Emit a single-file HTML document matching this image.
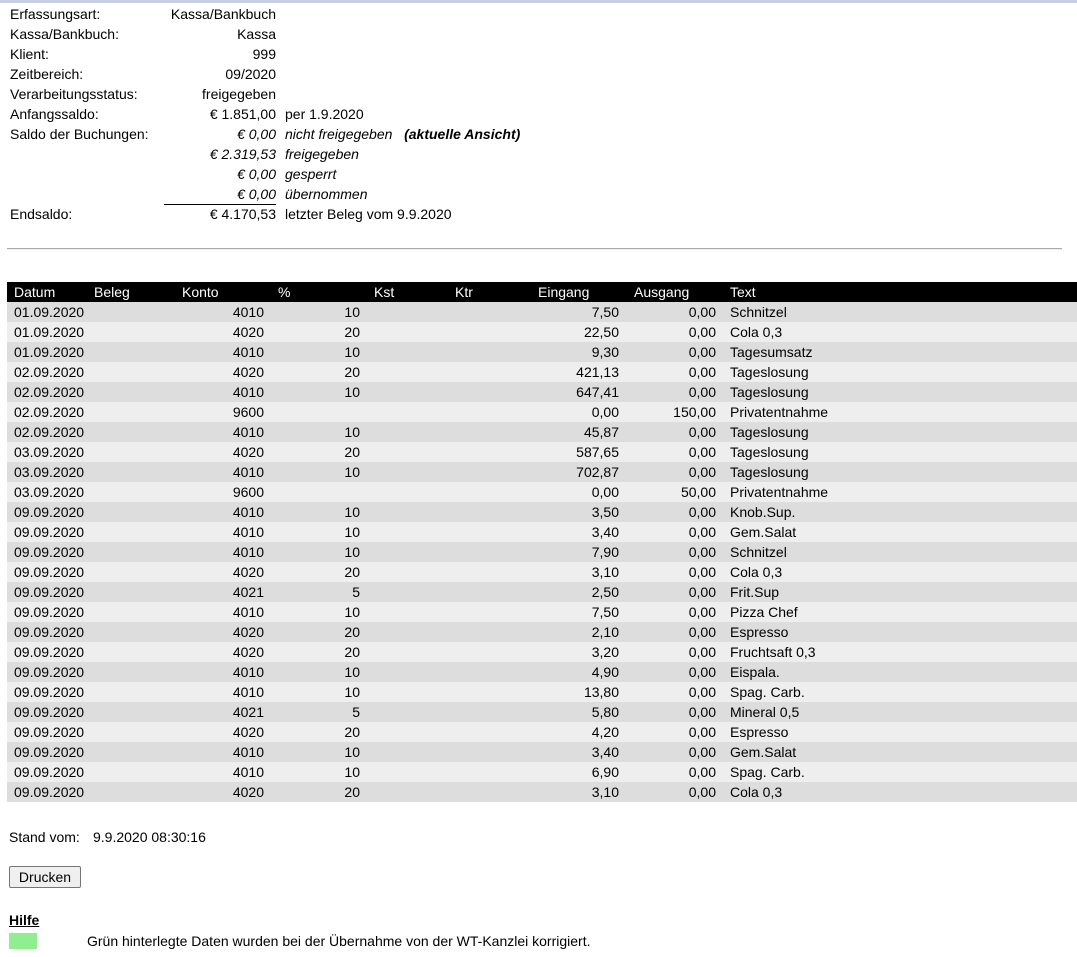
<!DOCTYPE html>
<html><head><meta charset="utf-8"><style>
body{margin:0;font-family:"Liberation Sans",Arial,sans-serif;font-size:14px;color:#000;background:#fff;width:1077px;height:957px;position:relative;overflow:hidden}
.topbar{position:absolute;left:0;top:0;width:1077px;height:3px;background:#c8cfe0}
.r{position:absolute;height:20px;line-height:20px;white-space:nowrap}
.a{position:absolute;white-space:nowrap}
.rt{text-align:right}
.row{position:absolute;left:7px;width:1070px;height:20px;line-height:20px}
.row span{position:absolute;white-space:nowrap}
</style></head><body>
<div class="topbar"></div>
<div id="hdr"></div>
<div style="position:absolute;left:164px;top:204px;width:112px;border-top:1px solid #000"></div>
<div style="position:absolute;left:7px;top:248px;width:1055px;border-top:1px solid #aaa;border-bottom:1px solid #eee"></div>
<div id="tbl"></div>
<div class="a" style="left:9px;top:829px">Stand vom:</div>
<div class="a" style="left:93px;top:829px">9.9.2020 08:30:16</div>
<div style="position:absolute;left:9px;top:866px;width:70px;height:20px;border:1px solid #767676;border-radius:2px;background:#efefef;text-align:center;line-height:20px;font-size:14px">Drucken</div>
<div class="a" style="left:9px;top:912px;font-weight:bold;text-decoration:underline">Hilfe</div>
<div style="position:absolute;left:9px;top:933px;width:28px;height:16px;background:#90ee90"></div>
<div class="a" style="left:87px;top:933px">Grün hinterlegte Daten wurden bei der Übernahme von der WT-Kanzlei korrigiert.</div>
<script>
var H=[["Erfassungsart:","Kassa/Bankbuch",""],["Kassa/Bankbuch:","Kassa",""],["Klient:","999",""],["Zeitbereich:","09/2020",""],["Verarbeitungsstatus:","freigegeben",""],["Anfangssaldo:","€ 1.851,00","per 1.9.2020"],["Saldo der Buchungen:","<i>€ 0,00</i>","<i>nicht freigegeben</i>&nbsp;&nbsp; <b><i>(aktuelle Ansicht)</i></b>"],["","<i>€ 2.319,53</i>","<i>freigegeben</i>"],["","<i>€ 0,00</i>","<i>gesperrt</i>"],["","<i>€ 0,00</i>","<i>übernommen</i>"],["Endsaldo:","€ 4.170,53","letzter Beleg vom 9.9.2020"]];
var s="";H.forEach(function(h,i){var t=4+i*20;s+='<div class="r" style="left:10px;top:'+t+'px">'+h[0]+'</div><div class="r rt" style="left:140px;width:136px;top:'+t+'px">'+h[1]+'</div><div class="r" style="left:285px;top:'+t+'px">'+h[2]+'</div>';});
document.getElementById("hdr").innerHTML=s;
var D=[["01.09.2020","4010","10","7,50","0,00","Schnitzel"],["01.09.2020","4020","20","22,50","0,00","Cola 0,3"],["01.09.2020","4010","10","9,30","0,00","Tagesumsatz"],["02.09.2020","4020","20","421,13","0,00","Tageslosung"],["02.09.2020","4010","10","647,41","0,00","Tageslosung"],["02.09.2020","9600","","0,00","150,00","Privatentnahme"],["02.09.2020","4010","10","45,87","0,00","Tageslosung"],["03.09.2020","4020","20","587,65","0,00","Tageslosung"],["03.09.2020","4010","10","702,87","0,00","Tageslosung"],["03.09.2020","9600","","0,00","50,00","Privatentnahme"],["09.09.2020","4010","10","3,50","0,00","Knob.Sup."],["09.09.2020","4010","10","3,40","0,00","Gem.Salat"],["09.09.2020","4010","10","7,90","0,00","Schnitzel"],["09.09.2020","4020","20","3,10","0,00","Cola 0,3"],["09.09.2020","4021","5","2,50","0,00","Frit.Sup"],["09.09.2020","4010","10","7,50","0,00","Pizza Chef"],["09.09.2020","4020","20","2,10","0,00","Espresso"],["09.09.2020","4020","20","3,20","0,00","Fruchtsaft 0,3"],["09.09.2020","4010","10","4,90","0,00","Eispala."],["09.09.2020","4010","10","13,80","0,00","Spag. Carb."],["09.09.2020","4021","5","5,80","0,00","Mineral 0,5"],["09.09.2020","4020","20","4,20","0,00","Espresso"],["09.09.2020","4010","10","3,40","0,00","Gem.Salat"],["09.09.2020","4010","10","6,90","0,00","Spag. Carb."],["09.09.2020","4020","20","3,10","0,00","Cola 0,3"]];
var o='<div class="row" style="top:282px;background:#000;color:#fff"><span style="left:7px">Datum</span><span style="left:87px">Beleg</span><span style="left:175px">Konto</span><span style="left:271px">%</span><span style="left:367px">Kst</span><span style="left:448px">Ktr</span><span style="left:531px">Eingang</span><span style="left:627px">Ausgang</span><span style="left:723px">Text</span></div>';
D.forEach(function(d,i){var t=302+i*20;o+='<div class="row" style="top:'+t+'px;background:'+(i%2?'#eeeeee':'#dddddd')+'"><span style="left:7px">'+d[0]+'</span><span class="rt" style="left:157px;width:100px">'+d[1]+'</span><span class="rt" style="left:253px;width:100px">'+d[2]+'</span><span class="rt" style="left:512px;width:100px">'+d[3]+'</span><span class="rt" style="left:609px;width:100px">'+d[4]+'</span><span style="left:723px">'+d[5]+'</span></div>';});
document.getElementById("tbl").innerHTML=o;
</script>
</body></html>
